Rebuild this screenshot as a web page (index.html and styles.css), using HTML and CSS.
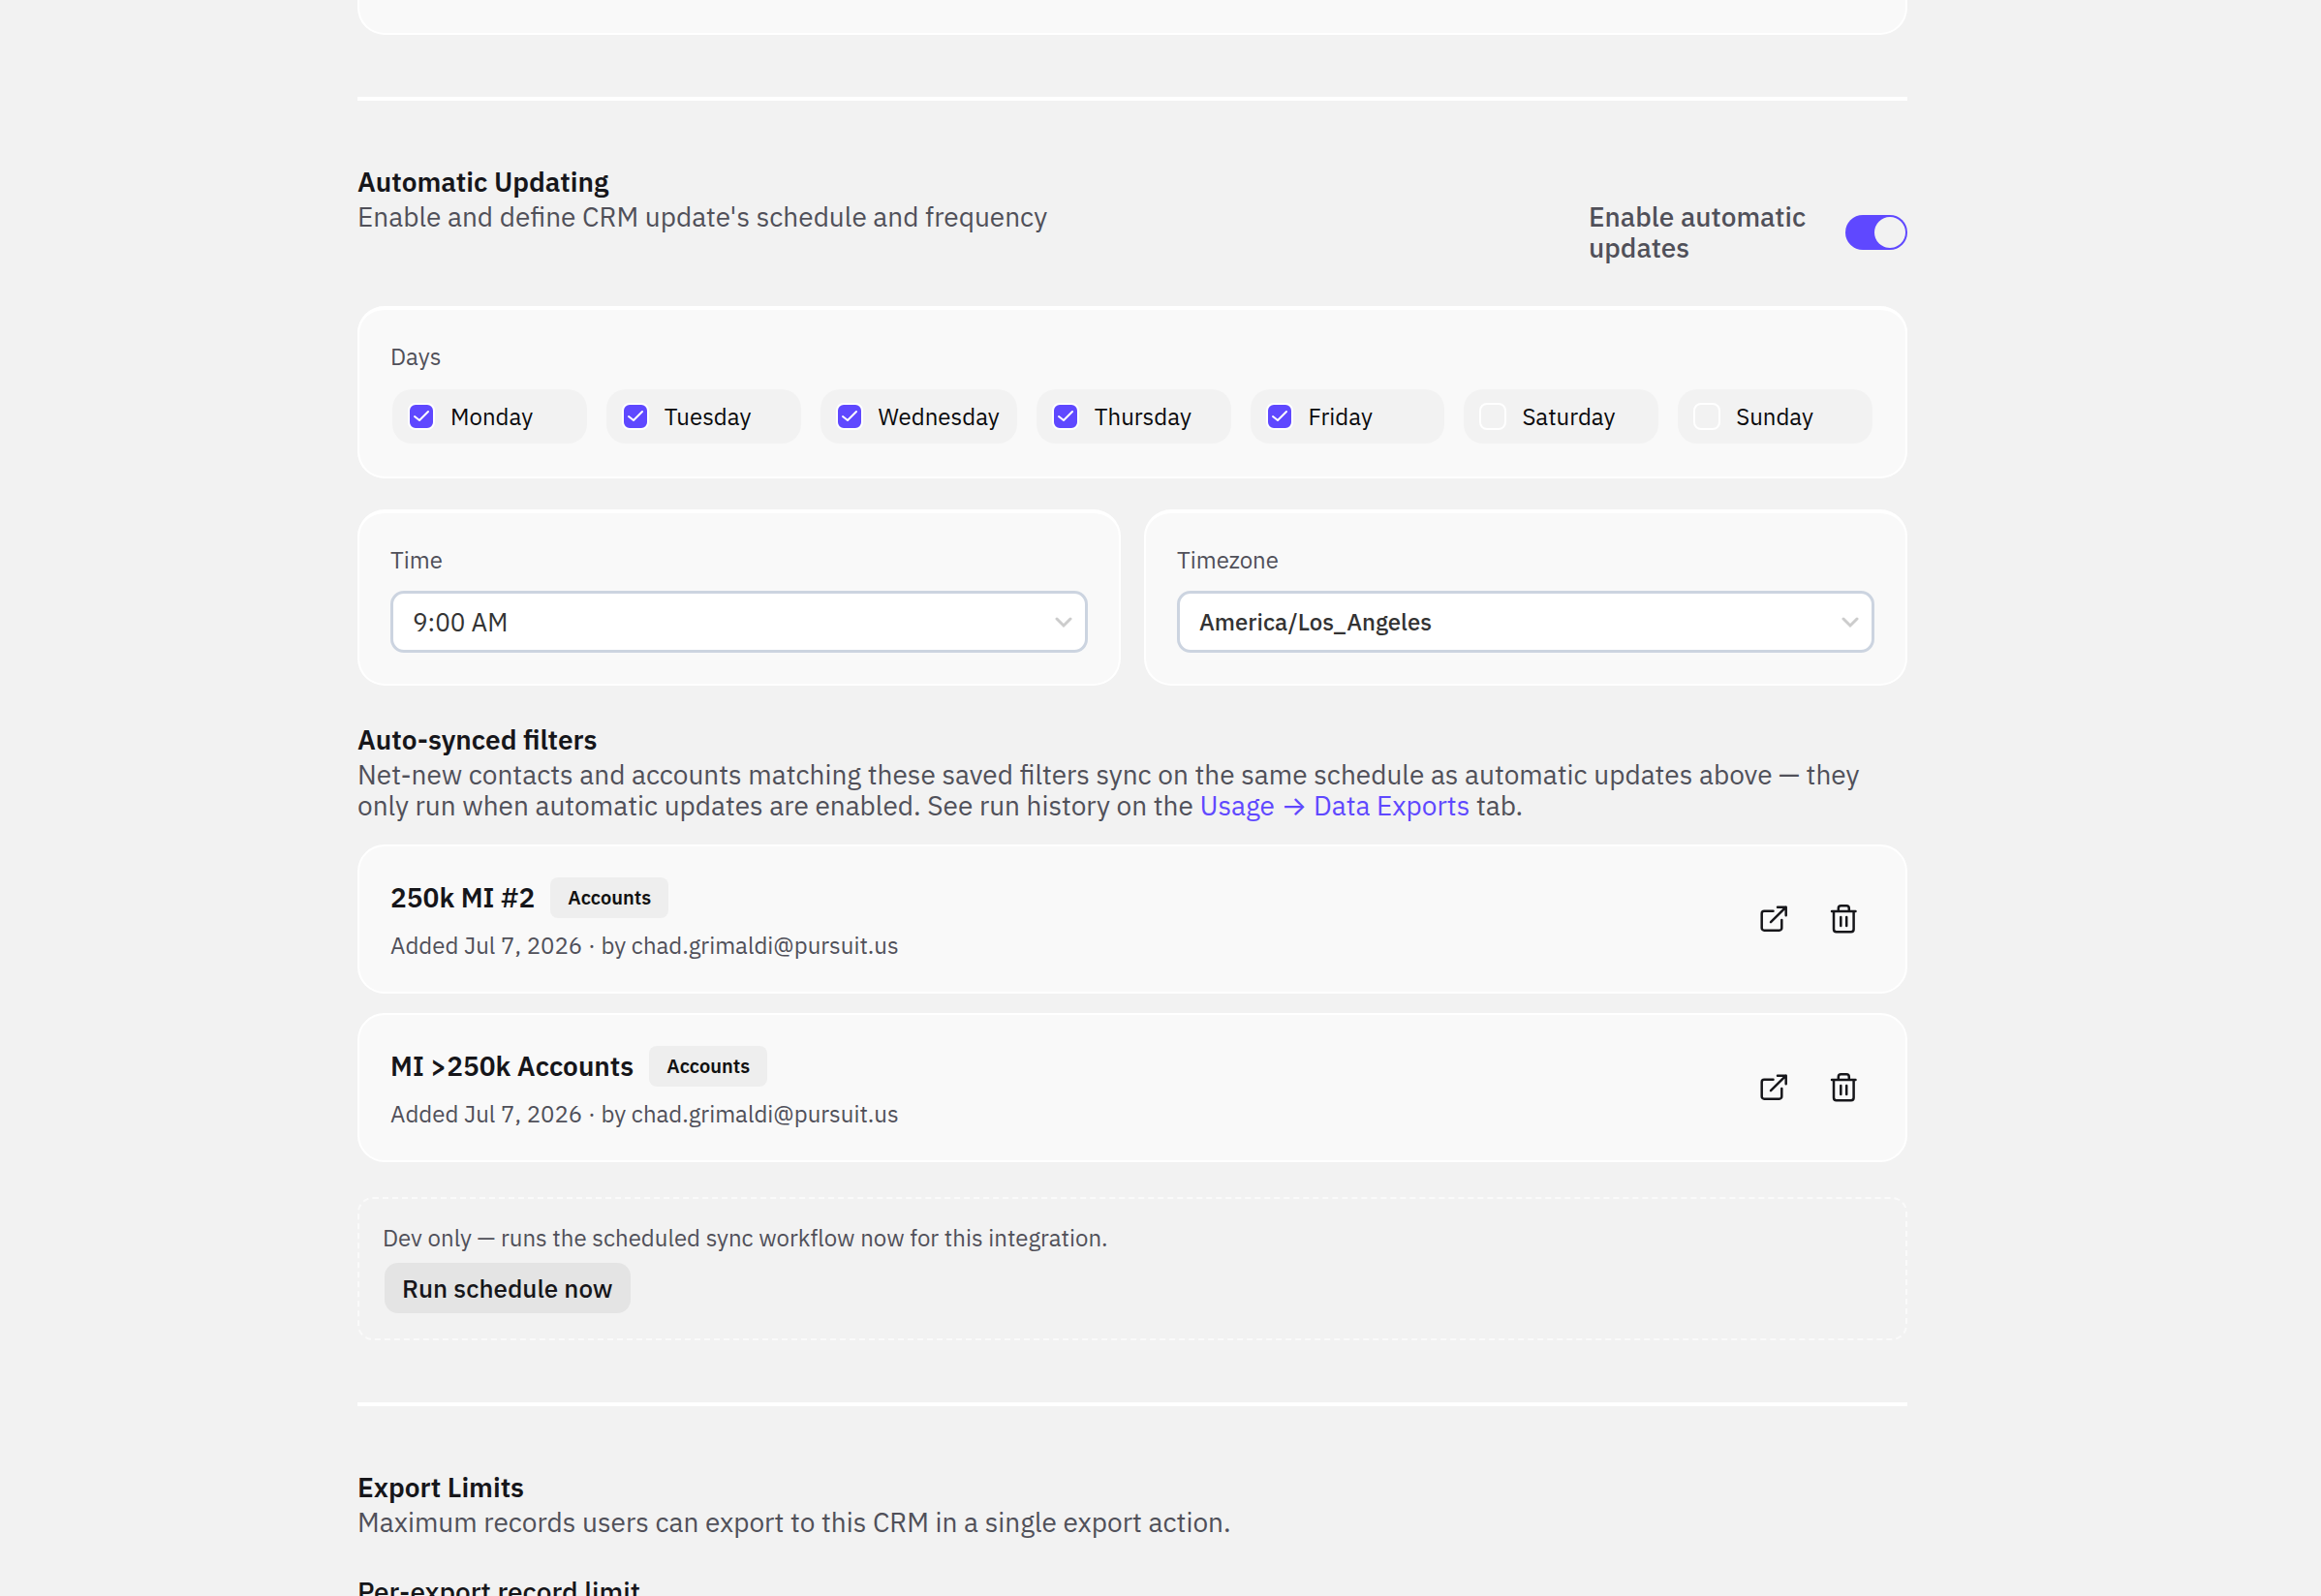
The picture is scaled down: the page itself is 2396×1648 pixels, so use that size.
FILE: index.html
```
<!DOCTYPE html>
<html lang="en">

<head>
    <meta charset="UTF-8">
    <meta name="viewport" content="width=device-width, initial-scale=1.0">
    <title>CRM Settings</title>
    <link rel="stylesheet" href="styles.css">
</head>

<body>
    <svg class="sprite" aria-hidden="true">
        <symbol id="icon-open" viewBox="0 0 32 32">
            <path d="M15.500 7.700H6.200a2.500 2.500 0 0 0-2.500 2.500v15a2.500 2.500 0 0 0 2.500 2.500h15.600a2.500 2.500 0 0 0 2.500-2.500V17M13 19.200 28.700 3.700M20 3.700h8.700v8.500" />
        </symbol>
        <symbol id="icon-trash" viewBox="0 0 32 32">
            <path d="M4 8h24.500M6 8v18.600a2.700 2.700 0 0 0 2.700 2.700h15.200a2.700 2.700 0 0 0 2.700-2.700V8M10.800 8V5a2.700 2.700 0 0 1 2.700-2.700h5.600A2.700 2.700 0 0 1 21.800 5v3M13.300 14v9M19.200 14v9" />
        </symbol>
        <symbol id="icon-chevron" viewBox="0 0 18 12">
            <path d="M2 2l7 7 7-7" />
        </symbol>
    </svg>

    <main class="page">
        <div class="card card-previous"></div>

        <hr class="divider">

        <section>
            <div class="section-header">
                <div>
                    <h2>Automatic Updating</h2>
                    <p>Enable and define CRM update's schedule and frequency</p>
                </div>
                <div class="toggle">
                    <label for="auto-updates">Enable automatic updates</label>
                    <input type="checkbox" role="switch" id="auto-updates" class="switch" checked>
                </div>
            </div>

            <fieldset class="card card-raised days-card">
                <legend class="field-label">Days</legend>
                <div class="days">
                    <label class="day"><input type="checkbox" checked>Monday</label>
                    <label class="day"><input type="checkbox" checked>Tuesday</label>
                    <label class="day"><input type="checkbox" checked>Wednesday</label>
                    <label class="day"><input type="checkbox" checked>Thursday</label>
                    <label class="day"><input type="checkbox" checked>Friday</label>
                    <label class="day"><input type="checkbox">Saturday</label>
                    <label class="day"><input type="checkbox">Sunday</label>
                </div>
            </fieldset>

            <div class="schedule">
                <div class="card card-raised">
                    <label class="field-label" for="time">Time</label>
                    <div class="select">
                        <select id="time">
                            <option>9:00 AM</option>
                        </select>
                        <svg class="chevron" aria-hidden="true"><use href="#icon-chevron" /></svg>
                    </div>
                </div>
                <div class="card card-raised">
                    <label class="field-label" for="timezone">Timezone</label>
                    <div class="select select-strong">
                        <select id="timezone">
                            <option>America/Los_Angeles</option>
                        </select>
                        <svg class="chevron" aria-hidden="true"><use href="#icon-chevron" /></svg>
                    </div>
                </div>
            </div>
        </section>

        <section class="filters">
            <h2>Auto-synced filters</h2>
            <p>Net-new contacts and accounts matching these saved filters sync on the same schedule as automatic updates above — they only run when automatic updates are enabled. See run history on the <a href="#">Usage <span class="arrow">→</span> Data Exports</a> tab.</p>

            <ul class="filter-list">
                <li class="card filter">
                    <div>
                        <div class="filter-title">
                            <h3>250k MI #2</h3>
                            <span class="badge">Accounts</span>
                        </div>
                        <p class="small">Added Jul 7, 2026 · by chad.grimaldi@pursuit.us</p>
                    </div>
                    <div class="filter-actions">
                        <button type="button" class="icon-button" aria-label="Open filter"><svg><use href="#icon-open" /></svg></button>
                        <button type="button" class="icon-button" aria-label="Delete filter"><svg><use href="#icon-trash" /></svg></button>
                    </div>
                </li>
                <li class="card filter">
                    <div>
                        <div class="filter-title">
                            <h3>MI &gt;250k Accounts</h3>
                            <span class="badge">Accounts</span>
                        </div>
                        <p class="small">Added Jul 7, 2026 · by chad.grimaldi@pursuit.us</p>
                    </div>
                    <div class="filter-actions">
                        <button type="button" class="icon-button" aria-label="Open filter"><svg><use href="#icon-open" /></svg></button>
                        <button type="button" class="icon-button" aria-label="Delete filter"><svg><use href="#icon-trash" /></svg></button>
                    </div>
                </li>
            </ul>

            <div class="dev-box">
                <p class="small">Dev only — runs the scheduled sync workflow now for this integration.</p>
                <button type="button" class="run-button">Run schedule now</button>
            </div>
        </section>

        <hr class="divider">

        <section>
            <h2>Export Limits</h2>
            <p>Maximum records users can export to this CRM in a single export action.</p>
            <h3 class="limit-title">Per-export record limit</h3>
        </section>
    </main>
</body>

</html>
```
FILE: styles.css
```
* {
    box-sizing: border-box;
}

body {
    margin: 0;
    padding: 0 58px 0 0;
    height: 100vh;
    overflow: hidden;
    background-color: #f2f2f2;
    color: #505059;
    font-family: "IBM Plex Sans", Roboto, sans-serif;
    font-size: 28px;
    line-height: 32px;
}

h2,
h3,
p,
ul {
    margin: 0;
    padding: 0;
}

h2,
h3 {
    color: #16161a;
    font-size: 28px;
    font-weight: 600;
}

h2 {
    line-height: 40px;
}

a {
    color: #5f48ff;
    text-decoration: none;
}

.arrow {
    font-family: Inter, sans-serif;
}

button,
select {
    font-family: inherit;
}

.sprite {
    display: none;
}

.page {
    max-width: 1600px;
    margin: 0 auto;
}

.card {
    background-color: #f9f9f9;
    border: 2px solid #fff;
    border-radius: 28px;
    padding: 32px;
}

.card-raised {
    border-top-width: 4px;
}

.card-previous {
    height: 36px;
    padding: 0;
    border-top: 0;
    border-radius: 0 0 28px 28px;
}

.divider {
    height: 4px;
    margin: 64px 0;
    border: 0;
    background-color: #fff;
}

.section-header {
    display: flex;
    justify-content: space-between;
    align-items: flex-start;
    margin-bottom: 44px;
}

/* toggle */
.toggle {
    display: flex;
    align-items: center;
    gap: 24px;
    margin-top: 40px;
    font-weight: 500;
}

.toggle label {
    width: 241px;
}

.switch {
    appearance: none;
    flex: none;
    width: 64px;
    height: 36px;
    margin: 0;
    padding: 2px;
    border-radius: 18px;
    background-color: #c8c8cc;
    cursor: pointer;
}

.switch::before {
    content: "";
    display: block;
    width: 32px;
    height: 32px;
    border-radius: 50%;
    background-color: #f2f2f2;
}

.switch:checked {
    background-color: #5f48ff;
}

.switch:checked::before {
    margin-left: auto;
}

/* days */
.days-card {
    margin: 0;
    min-width: 0;
}

.field-label {
    display: block;
    float: left;
    width: 100%;
    margin-bottom: 16px;
    padding: 0;
    font-size: 24px;
}

.days {
    clear: both;
    display: flex;
    gap: 20px;
    padding: 2px;
}

.day {
    display: flex;
    flex: 1;
    align-items: center;
    gap: 16px;
    height: 56px;
    padding: 0 18px 0 16px;
    border-radius: 20px;
    background-color: #f2f2f2;
    color: #0a0a0c;
    font-size: 24px;
}

.day input {
    appearance: none;
    flex: none;
    width: 28px;
    height: 28px;
    margin: 0;
    border: 2px solid #fff;
    border-radius: 8px;
}

.day input:checked {
    background: #5f48ff url("data:image/svg+xml,%3Csvg xmlns='http://www.w3.org/2000/svg' viewBox='0 0 24 24' fill='none' stroke='white' stroke-width='2' stroke-linecap='round' stroke-linejoin='round'%3E%3Cpath d='M5 12l5 4 9-9'/%3E%3C/svg%3E") center / 24px no-repeat;
}

/* time and timezone */
.schedule {
    display: grid;
    grid-template-columns: 1fr 1fr;
    gap: 24px;
    margin-top: 32px;
}

.select {
    clear: both;
    position: relative;
}

.select select {
    appearance: none;
    display: block;
    width: 100%;
    height: 64px;
    padding: 0 60px 0 20px;
    border: 3px solid #ccd4e0;
    border-radius: 14px;
    background-color: #fff;
    color: #333;
    font-size: 26px;
}

.select-strong select {
    font-size: 24px;
    font-weight: 500;
}

.chevron {
    position: absolute;
    right: 16px;
    top: 27px;
    width: 18px;
    height: 12px;
    fill: none;
    stroke: #ccc;
    stroke-width: 3;
    stroke-linecap: round;
    pointer-events: none;
}

/* filters */
.filters {
    margin-top: 36px;
}

.filter-list {
    display: grid;
    gap: 20px;
    margin-top: 24px;
    list-style: none;
}

.filter {
    display: flex;
    justify-content: space-between;
    align-items: center;
}

.filter-title {
    display: flex;
    align-items: center;
    gap: 16px;
    margin-bottom: 12px;
}

.small {
    font-size: 24px;
}

.badge {
    padding: 5px 18px;
    border-radius: 8px;
    background-color: #eee;
    color: #111;
    font-size: 20px;
    font-weight: 600;
}

.filter-actions {
    display: flex;
    gap: 8px;
}

.icon-button {
    width: 64px;
    height: 64px;
    padding: 16px;
    border: 0;
    background: none;
    cursor: pointer;
}

.icon-button svg {
    display: block;
    width: 32px;
    height: 32px;
    fill: none;
    stroke: #16161a;
    stroke-width: 2.5;
    stroke-linecap: round;
    stroke-linejoin: round;
}

.dev-box {
    margin-top: 36px;
    padding: 24px;
    border: 2px dashed #fafafa;
    border-radius: 16px;
}

.run-button {
    display: block;
    height: 52px;
    margin: 10px 2px 2px;
    padding: 0 18px;
    border: 0;
    border-radius: 14px;
    background-color: #e4e4e4;
    color: #16161a;
    font-size: 26px;
    font-weight: 500;
    cursor: pointer;
}

.limit-title {
    margin-top: 36px;
    font-weight: 500;
    line-height: 40px;
}
```
